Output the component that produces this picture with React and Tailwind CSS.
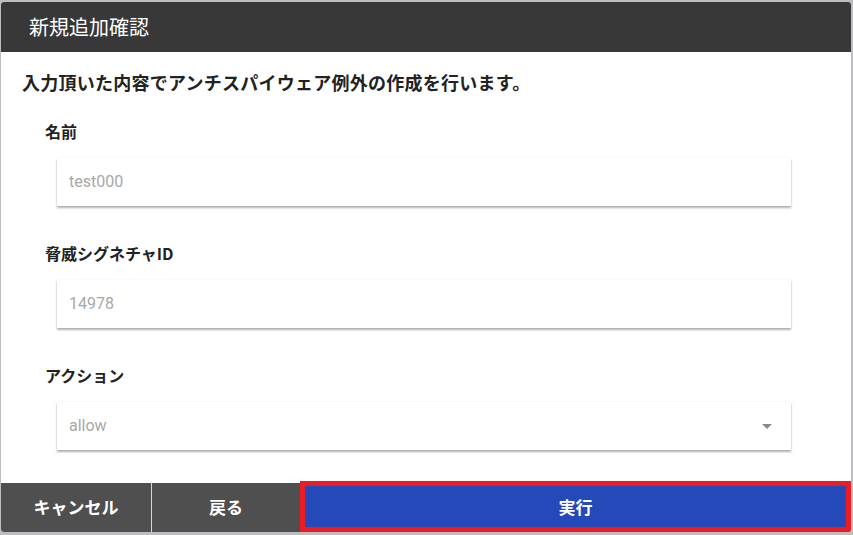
import React from "react";

const jp = { fontFamily: '"Noto Sans CJK JP", "Noto Sans", sans-serif' };

const Field = ({ label, value, select }) => (
    <div className="flex flex-col">
        <div className="h-[24px] leading-[24px] text-[16px] font-bold text-[#222]">{label}</div>
        <div className="relative mt-[15px] ml-[12px] w-[734px] h-[48px] bg-white flex items-center px-[12px] shadow-[0_2px_2px_rgba(0,0,0,0.3),0_0_2px_rgba(0,0,0,0.08)]">
            <span className="text-[16px] text-[#a8a8a8]" style={{ fontFamily: 'Roboto, "Noto Sans", sans-serif' }}>{value}</span>
            {select && (
                <svg className="absolute right-[19px] top-[22px]" width="10" height="5" viewBox="0 0 10 5">
                    <path d="M0 0 L10 0 L5 5 Z" fill="#8a8a8a" />
                </svg>
            )}
        </div>
    </div>
);

export default function App() {
    return (
        <div className="w-[853px] h-[535px] bg-[#bcbcc1] pt-[2px] pl-[1px]" style={jp}>
            <div className="w-[850px] h-[530px] bg-white rounded-[3px] overflow-hidden flex flex-col">
                {/* header */}
                <div className="h-[50px] shrink-0 bg-[#383838] flex items-center px-[28px] text-white text-[20px]">
                    新規追加確認
                </div>

                {/* body */}
                <div className="flex-1 flex flex-col">
                    <p className="mt-[18px] ml-[21px] h-[24px] leading-[24px] text-[18px] tracking-[0.25px] font-bold text-[#222]">
                        入力頂いた内容でアンチスパイウェア例外の作成を行います。
                    </p>
                    <div className="ml-[44px] mt-[25px] flex flex-col gap-[35px]">
                        <Field label="名前" value="test000" />
                        <Field label="脅威シグネチャID" value="14978" />
                        <Field label="アクション" value="allow" select />
                    </div>
                </div>

                {/* footer */}
                <div className="h-[51px] shrink-0 flex items-end bg-white">
                    <button className="w-[150px] h-[49px] pb-[2px] bg-[#4f4f4f] text-white text-[17px] font-bold">キャンセル</button>
                    <div className="w-px h-[49px] bg-[#d8d8d8]" />
                    <button className="w-[148px] h-[49px] pb-[2px] bg-[#4f4f4f] text-white text-[17px] font-bold">戻る</button>
                    <button className="w-[551px] h-[51px] bg-[#2449b8] border-[5px] border-[#ec1c24] text-white text-[17px] font-bold">実行</button>
                </div>
            </div>
        </div>
    );
}
